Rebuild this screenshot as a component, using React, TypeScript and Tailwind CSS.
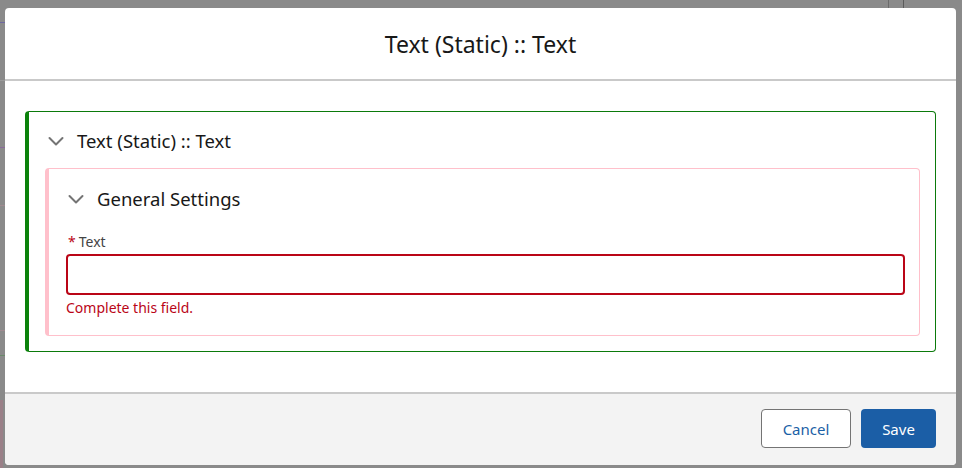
import React from "react";

function Chevron() {
  return (
    <svg width="16" height="16" viewBox="0 0 16 16" className="shrink-0">
      <polyline points="1.5,5 8,11.5 14.5,5" fill="none" stroke="#747474" strokeWidth="2" strokeLinecap="round" strokeLinejoin="round" />
    </svg>
  );
}

export default function App() {
  return (
    <div
      className="relative w-[962px] h-[468px] overflow-hidden bg-[#8a8a8a] pl-[5px] pt-[8px]"
      style={{ fontFamily: '"Noto Sans", "Open Sans", sans-serif' }}
    >
      {/* faint page content behind overlay */}
      <div className="absolute left-0 top-[22px] w-[5px] h-[1px] bg-[#6e68a0]" />
      <div className="absolute left-0 top-[80px] w-[5px] h-[1px] bg-[#9a9a9a]" />
      <div className="absolute left-0 top-[147px] w-[5px] h-[1px] bg-[#8a6a9a]" />
      <div className="absolute left-0 top-[205px] w-[5px] h-[1px] bg-[#a08a90]" />
      <div className="absolute left-0 top-[330px] w-[5px] h-[1px] bg-[#a08a90]" />
      <div className="absolute left-0 top-[355px] w-[5px] h-[1px] bg-[#6a8a6a]" />
      <div className="absolute left-0 top-[400px] w-[3px] h-[68px] bg-[#9a8088]" />
      <div className="absolute left-[888px] top-0 w-[1px] h-[8px] bg-[#6a6a6a]" />
      <div className="absolute left-[903px] top-0 w-[1px] h-[8px] bg-[#5a5a5a]" />

      <div className="relative flex flex-col w-[951px] h-[457px] rounded-[4px] bg-white overflow-hidden">
        <div className="h-[73px] shrink-0 flex items-center justify-center border-b-2 border-[#c9c9c9]">
          <h2 className="text-[23px] leading-[28px] text-[#181818] pt-[1px]">Text (Static) :: Text</h2>
        </div>
        <div className="flex-1 px-[20px] pt-[30px]">
          <div className="h-[241px] rounded-[4px] border border-l-4 border-[#0b7a0b] border-l-[#0b820b] flex flex-col">
            <div className="h-[56px] flex items-center gap-[13px] pl-[19px] pt-[1px]">
              <Chevron />
              <span className="text-[18.5px] text-[#181818]">Text (Static) :: Text</span>
            </div>
            <div className="ml-[16px] mr-[15px] h-[168px] rounded-[4px] border border-l-4 border-[#ffc0cb] flex flex-col pl-[17px] pr-[14px]">
              <div className="h-[59px] shrink-0 flex items-center gap-[13px] pl-[2px]">
                <Chevron />
                <span className="text-[18.5px] text-[#181818]">General Settings</span>
              </div>
              <div className="flex items-center h-[26px] shrink-0 pl-[2px] text-[14px] text-[#444444]">
                <abbr className="no-underline text-[#ba0517] mr-[3px]" title="required">*</abbr>
                <span>Text</span>
              </div>
              <input className="h-[41px] shrink-0 w-full rounded-[4px] border-2 border-[#ba0517] outline-none px-3 text-[14px]" />
              <div className="mt-[3px] text-[14px] leading-[20px] text-[#ba0517]">Complete this field.</div>
            </div>
          </div>
        </div>
        <div className="h-[73px] shrink-0 border-t-2 border-[#c9c9c9] bg-[#f3f3f3] flex items-center justify-end gap-[10px] pr-[20px] pb-[2px]">
          <button className="h-[39px] w-[90px] rounded-[4px] border border-[#747474] bg-white text-[15px] text-[#1b5fa6] pt-[1px]">Cancel</button>
          <button className="h-[39px] w-[75px] rounded-[4px] bg-[#1b5ea6] text-[15px] text-white pt-[1px]">Save</button>
        </div>
      </div>
    </div>
  );
}
